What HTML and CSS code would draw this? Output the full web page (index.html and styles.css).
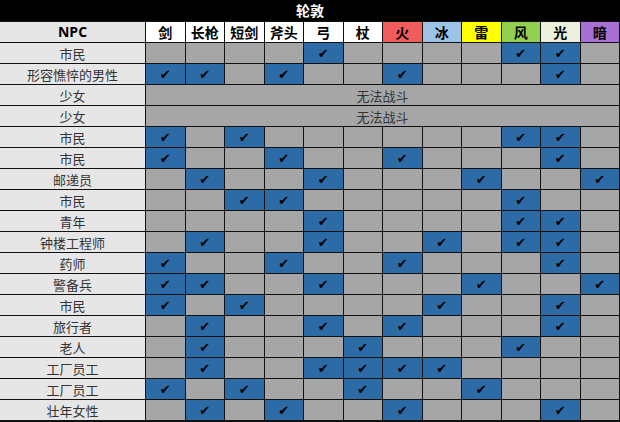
FILE: index.html
```html
<!DOCTYPE html>
<html lang="zh">
<head>
<meta charset="utf-8">
<link rel="stylesheet" href="styles.css">
</head>
<body>
<div class="sheet">
  <div class="title">轮敦</div>
  <div class="grid">
    <div class="h npc">NPC</div>
    <div class="h">剑</div><div class="h">长枪</div><div class="h">短剑</div><div class="h">斧头</div><div class="h">弓</div><div class="h">杖</div>
    <div class="h fire">火</div><div class="h ice">冰</div><div class="h thunder">雷</div><div class="h wind">风</div><div class="h light">光</div><div class="h dark">暗</div>

    <div class="n">市民</div>
    <div class="c"></div><div class="c"></div><div class="c"></div><div class="c"></div><div class="c y">✔</div><div class="c"></div><div class="c"></div><div class="c"></div><div class="c"></div><div class="c y">✔</div><div class="c y">✔</div><div class="c"></div>

    <div class="n">形容憔悴的男性</div>
    <div class="c y">✔</div><div class="c y">✔</div><div class="c"></div><div class="c y">✔</div><div class="c"></div><div class="c"></div><div class="c y">✔</div><div class="c"></div><div class="c"></div><div class="c"></div><div class="c y">✔</div><div class="c"></div>

    <div class="n">少女</div>
    <div class="c span">无法战斗</div>

    <div class="n">少女</div>
    <div class="c span">无法战斗</div>

    <div class="n">市民</div>
    <div class="c y">✔</div><div class="c"></div><div class="c y">✔</div><div class="c"></div><div class="c"></div><div class="c"></div><div class="c"></div><div class="c"></div><div class="c"></div><div class="c y">✔</div><div class="c y">✔</div><div class="c"></div>

    <div class="n">市民</div>
    <div class="c y">✔</div><div class="c"></div><div class="c"></div><div class="c y">✔</div><div class="c"></div><div class="c"></div><div class="c y">✔</div><div class="c"></div><div class="c"></div><div class="c"></div><div class="c y">✔</div><div class="c"></div>

    <div class="n">邮递员</div>
    <div class="c"></div><div class="c y">✔</div><div class="c"></div><div class="c"></div><div class="c y">✔</div><div class="c"></div><div class="c"></div><div class="c"></div><div class="c y">✔</div><div class="c"></div><div class="c"></div><div class="c y">✔</div>

    <div class="n">市民</div>
    <div class="c"></div><div class="c"></div><div class="c y">✔</div><div class="c y">✔</div><div class="c"></div><div class="c"></div><div class="c"></div><div class="c"></div><div class="c"></div><div class="c y">✔</div><div class="c"></div><div class="c"></div>

    <div class="n">青年</div>
    <div class="c"></div><div class="c"></div><div class="c"></div><div class="c"></div><div class="c y">✔</div><div class="c"></div><div class="c"></div><div class="c"></div><div class="c"></div><div class="c y">✔</div><div class="c y">✔</div><div class="c"></div>

    <div class="n">钟楼工程师</div>
    <div class="c"></div><div class="c y">✔</div><div class="c"></div><div class="c"></div><div class="c y">✔</div><div class="c"></div><div class="c"></div><div class="c y">✔</div><div class="c"></div><div class="c y">✔</div><div class="c y">✔</div><div class="c"></div>

    <div class="n">药师</div>
    <div class="c y">✔</div><div class="c"></div><div class="c"></div><div class="c y">✔</div><div class="c"></div><div class="c"></div><div class="c y">✔</div><div class="c"></div><div class="c"></div><div class="c"></div><div class="c y">✔</div><div class="c"></div>

    <div class="n">警备兵</div>
    <div class="c y">✔</div><div class="c y">✔</div><div class="c"></div><div class="c"></div><div class="c y">✔</div><div class="c"></div><div class="c"></div><div class="c"></div><div class="c y">✔</div><div class="c"></div><div class="c"></div><div class="c y">✔</div>

    <div class="n">市民</div>
    <div class="c y">✔</div><div class="c"></div><div class="c y">✔</div><div class="c"></div><div class="c"></div><div class="c"></div><div class="c"></div><div class="c y">✔</div><div class="c"></div><div class="c"></div><div class="c y">✔</div><div class="c"></div>

    <div class="n">旅行者</div>
    <div class="c"></div><div class="c y">✔</div><div class="c"></div><div class="c"></div><div class="c y">✔</div><div class="c"></div><div class="c y">✔</div><div class="c"></div><div class="c"></div><div class="c"></div><div class="c y">✔</div><div class="c"></div>

    <div class="n">老人</div>
    <div class="c"></div><div class="c y">✔</div><div class="c"></div><div class="c"></div><div class="c"></div><div class="c y">✔</div><div class="c"></div><div class="c"></div><div class="c"></div><div class="c y">✔</div><div class="c"></div><div class="c"></div>

    <div class="n">工厂员工</div>
    <div class="c"></div><div class="c y">✔</div><div class="c"></div><div class="c"></div><div class="c y">✔</div><div class="c y">✔</div><div class="c y">✔</div><div class="c y">✔</div><div class="c"></div><div class="c"></div><div class="c"></div><div class="c"></div>

    <div class="n">工厂员工</div>
    <div class="c y">✔</div><div class="c"></div><div class="c y">✔</div><div class="c"></div><div class="c"></div><div class="c y">✔</div><div class="c"></div><div class="c"></div><div class="c y">✔</div><div class="c"></div><div class="c"></div><div class="c"></div>

    <div class="n">壮年女性</div>
    <div class="c"></div><div class="c y">✔</div><div class="c"></div><div class="c y">✔</div><div class="c"></div><div class="c"></div><div class="c y">✔</div><div class="c"></div><div class="c"></div><div class="c"></div><div class="c y">✔</div><div class="c"></div>
  </div>
</div>
</body>
</html>
```

FILE: styles.css
```css
html, body {
  margin: 0;
  padding: 0;
  background: #000;
}
.sheet {
  width: 620px;
  height: 422px;
  background: #111;
  font-family: "Noto Sans CJK SC", "Noto Sans", sans-serif;
  overflow: hidden;
}
.title {
  height: 21px;
  background: #000;
  color: #fff;
  font-weight: bold;
  font-size: 14px;
  line-height: 21px;
  text-align: center;
}
.grid {
  display: grid;
  grid-template-columns: 145px repeat(12, 1fr);
  grid-auto-rows: 20px;
  gap: 1px;
  padding: 1px 1px 1px 0;
}
.grid > div {
  display: flex;
  align-items: center;
  justify-content: center;
  line-height: 1;
}
.h {
  background: #fff;
  color: #000;
  font-weight: bold;
  font-size: 14px;
}
.h.npc {
  background: #e7e6e6;
  font-family: "Open Sans", "Noto Sans", sans-serif;
  font-size: 14px;
}
.h.fire { background: #f25c5c; }
.h.ice { background: #9dc3e6; }
.h.thunder { background: #ffff00; }
.h.wind { background: #92d050; }
.h.light { background: #ebefdc; }
.h.dark { background: #a86fd4; }
.n {
  background: #e7e6e6;
  color: #333;
  font-size: 13px;
}
.c {
  background: #a6a6a6;
  color: #000;
  font-family: "DejaVu Sans", sans-serif;
  font-size: 13px;
  padding-top: 1px;
}
.c.y {
  background: #2d6ba6;
}
.c.span {
  grid-column: span 12;
  font-family: "Noto Sans CJK SC", sans-serif;
  font-size: 13px;
  color: #333;
  padding-top: 0;
}
```
